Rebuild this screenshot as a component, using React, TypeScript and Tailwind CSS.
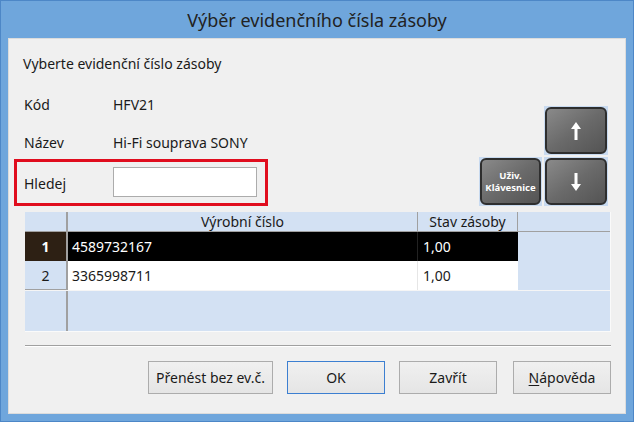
import React from "react";

const font = { fontFamily: '"Noto Sans", "Open Sans", sans-serif' };

function NavButton({ children, className }: { children: React.ReactNode; className?: string }) {
  return (
    <div className={"p-[1px] bg-[#c8daf0] " + (className || "")}>
      <div className="w-full h-full rounded-[6px] border-2 border-[#2e2e2e] bg-gradient-to-br from-[#8a8a8a] via-[#6a6a6a] to-[#545454] flex items-center justify-center text-white">
        {children}
      </div>
    </div>
  );
}

function Arrow({ up }: { up?: boolean }) {
  return (
    <svg width="12" height="20" viewBox="0 0 12 20" className={up ? "" : "rotate-180"}>
      <path d="M6 1 L11 8 H7.5 V19 H4.5 V8 H1 Z" fill="white" />
    </svg>
  );
}

function Btn({ children, focused, className }: { children: React.ReactNode; focused?: boolean; className?: string }) {
  return (
    <button
      className={
        "h-[33px] text-[14px] text-[#1a1a1a] bg-gradient-to-b from-[#f0f0f0] to-[#e5e5e5] border " +
        (focused ? "border-[#3c7fd1]" : "border-[#acacac]") +
        " " +
        (className || "")
      }
    >
      {children}
    </button>
  );
}

export default function App() {
  return (
    <div className="w-[634px] h-[422px] bg-[#6fa6dc] border border-[#4d87c7] flex flex-col" style={font}>
      {/* Title bar */}
      <div className="h-[37px] flex items-center justify-center text-[18px] text-[#222] pt-[1px]">
        Výběr evidenčního čísla zásoby
      </div>

      {/* Content */}
      <div className="mx-[7px] h-[376px] bg-[#f0f0f0] border border-[#dcdcdc] flex flex-col text-[14px] text-[#1a1a1a]">
        <div className="flex h-[172px]">
          <div className="flex-1 flex flex-col">
            <div className="h-[48px] flex items-center pl-[14px]">Vyberte evidenční číslo zásoby</div>
            <div className="h-[34px] flex items-center pl-[15px]">
              <span className="w-[89px]">Kód</span>
              <span>HFV21</span>
            </div>
            <div className="h-[38px] flex items-center pl-[15px] pt-[4px]">
              <span className="w-[89px]">Název</span>
              <span>Hi-Fi souprava SONY</span>
            </div>
            <div className="ml-[5px] w-[254px] h-[47px] border-[3px] border-[#e00d1e] flex items-center pl-[7px] pb-[2px]">
              <span className="w-[89px] pt-[4px]">Hledej</span>
              <div className="w-[144px] h-[30px] bg-white border border-[#acacac]" />
            </div>
          </div>
          <div className="w-[146px] pt-[67px] pr-[17px] flex flex-col items-end gap-[2px]">
            <NavButton className="w-[64px] h-[49px]">
              <Arrow up />
            </NavButton>
            <div className="flex gap-[2px]">
              <NavButton className="w-[63px] h-[49px]">
                <div className="text-[9.5px] font-bold leading-[12px] text-center">
                  Uživ.
                  <br />
                  Klávesnice
                </div>
              </NavButton>
              <NavButton className="w-[64px] h-[49px]">
                <Arrow />
              </NavButton>
            </div>
          </div>
        </div>

        {/* Grid */}
        <div className="ml-[16px] mt-[1px] w-[586px] h-[120px] bg-[#d3e1f3] border-b border-r border-[#fafafa] flex flex-col text-[14px]">
          <div className="flex h-[20px] border-b border-[#a0a0a0]">
            <div className="w-[43px] border-r-2 border-[#a0a0a0]" />
            <div className="w-[350px] border-r border-[#a0a0a0] flex items-center justify-center leading-none">Výrobní číslo</div>
            <div className="w-[100px] border-r border-[#a0a0a0] flex items-center justify-center leading-none">Stav zásoby</div>
          </div>
          <div className="flex h-[29px]">
            <div className="w-[43px] bg-[#2d2014] border-r-2 border-[#a0a0a0] text-white font-bold flex items-center justify-center">1</div>
            <div className="w-[350px] bg-black text-white border-r border-[#222] flex items-center pl-[4px]">4589732167</div>
            <div className="w-[100px] bg-black text-white flex items-center pl-[5px]">1,00</div>
          </div>
          <div className="flex h-[30px] border-b border-[#f5f5f5]">
            <div className="w-[43px] border-r-2 border-b border-[#a0a0a0] flex items-center justify-center">2</div>
            <div className="w-[350px] bg-white border-r border-[#e6e6e6] flex items-center pl-[4px]">3365998711</div>
            <div className="w-[100px] bg-white flex items-center pl-[5px]">1,00</div>
          </div>
          <div className="flex flex-1">
            <div className="w-[43px] border-r-2 border-[#a0a0a0]" />
          </div>
        </div>

        {/* Separator */}
        <div className="ml-[16px] mt-[13px] w-[586px] h-[2px] bg-[#a0a0a0] border-b border-white" />

        {/* Buttons */}
        <div className="flex mt-[14px] pl-[139px]">
          <Btn className="w-[125px]">Přenést bez ev.č.</Btn>
          <Btn focused className="w-[98px] ml-[14px]">OK</Btn>
          <Btn className="w-[98px] ml-[14px]">Zavřít</Btn>
          <Btn className="w-[98px] ml-[16px]">
            <span className="underline underline-offset-2">N</span>ápověda
          </Btn>
        </div>
      </div>
    </div>
  );
}
